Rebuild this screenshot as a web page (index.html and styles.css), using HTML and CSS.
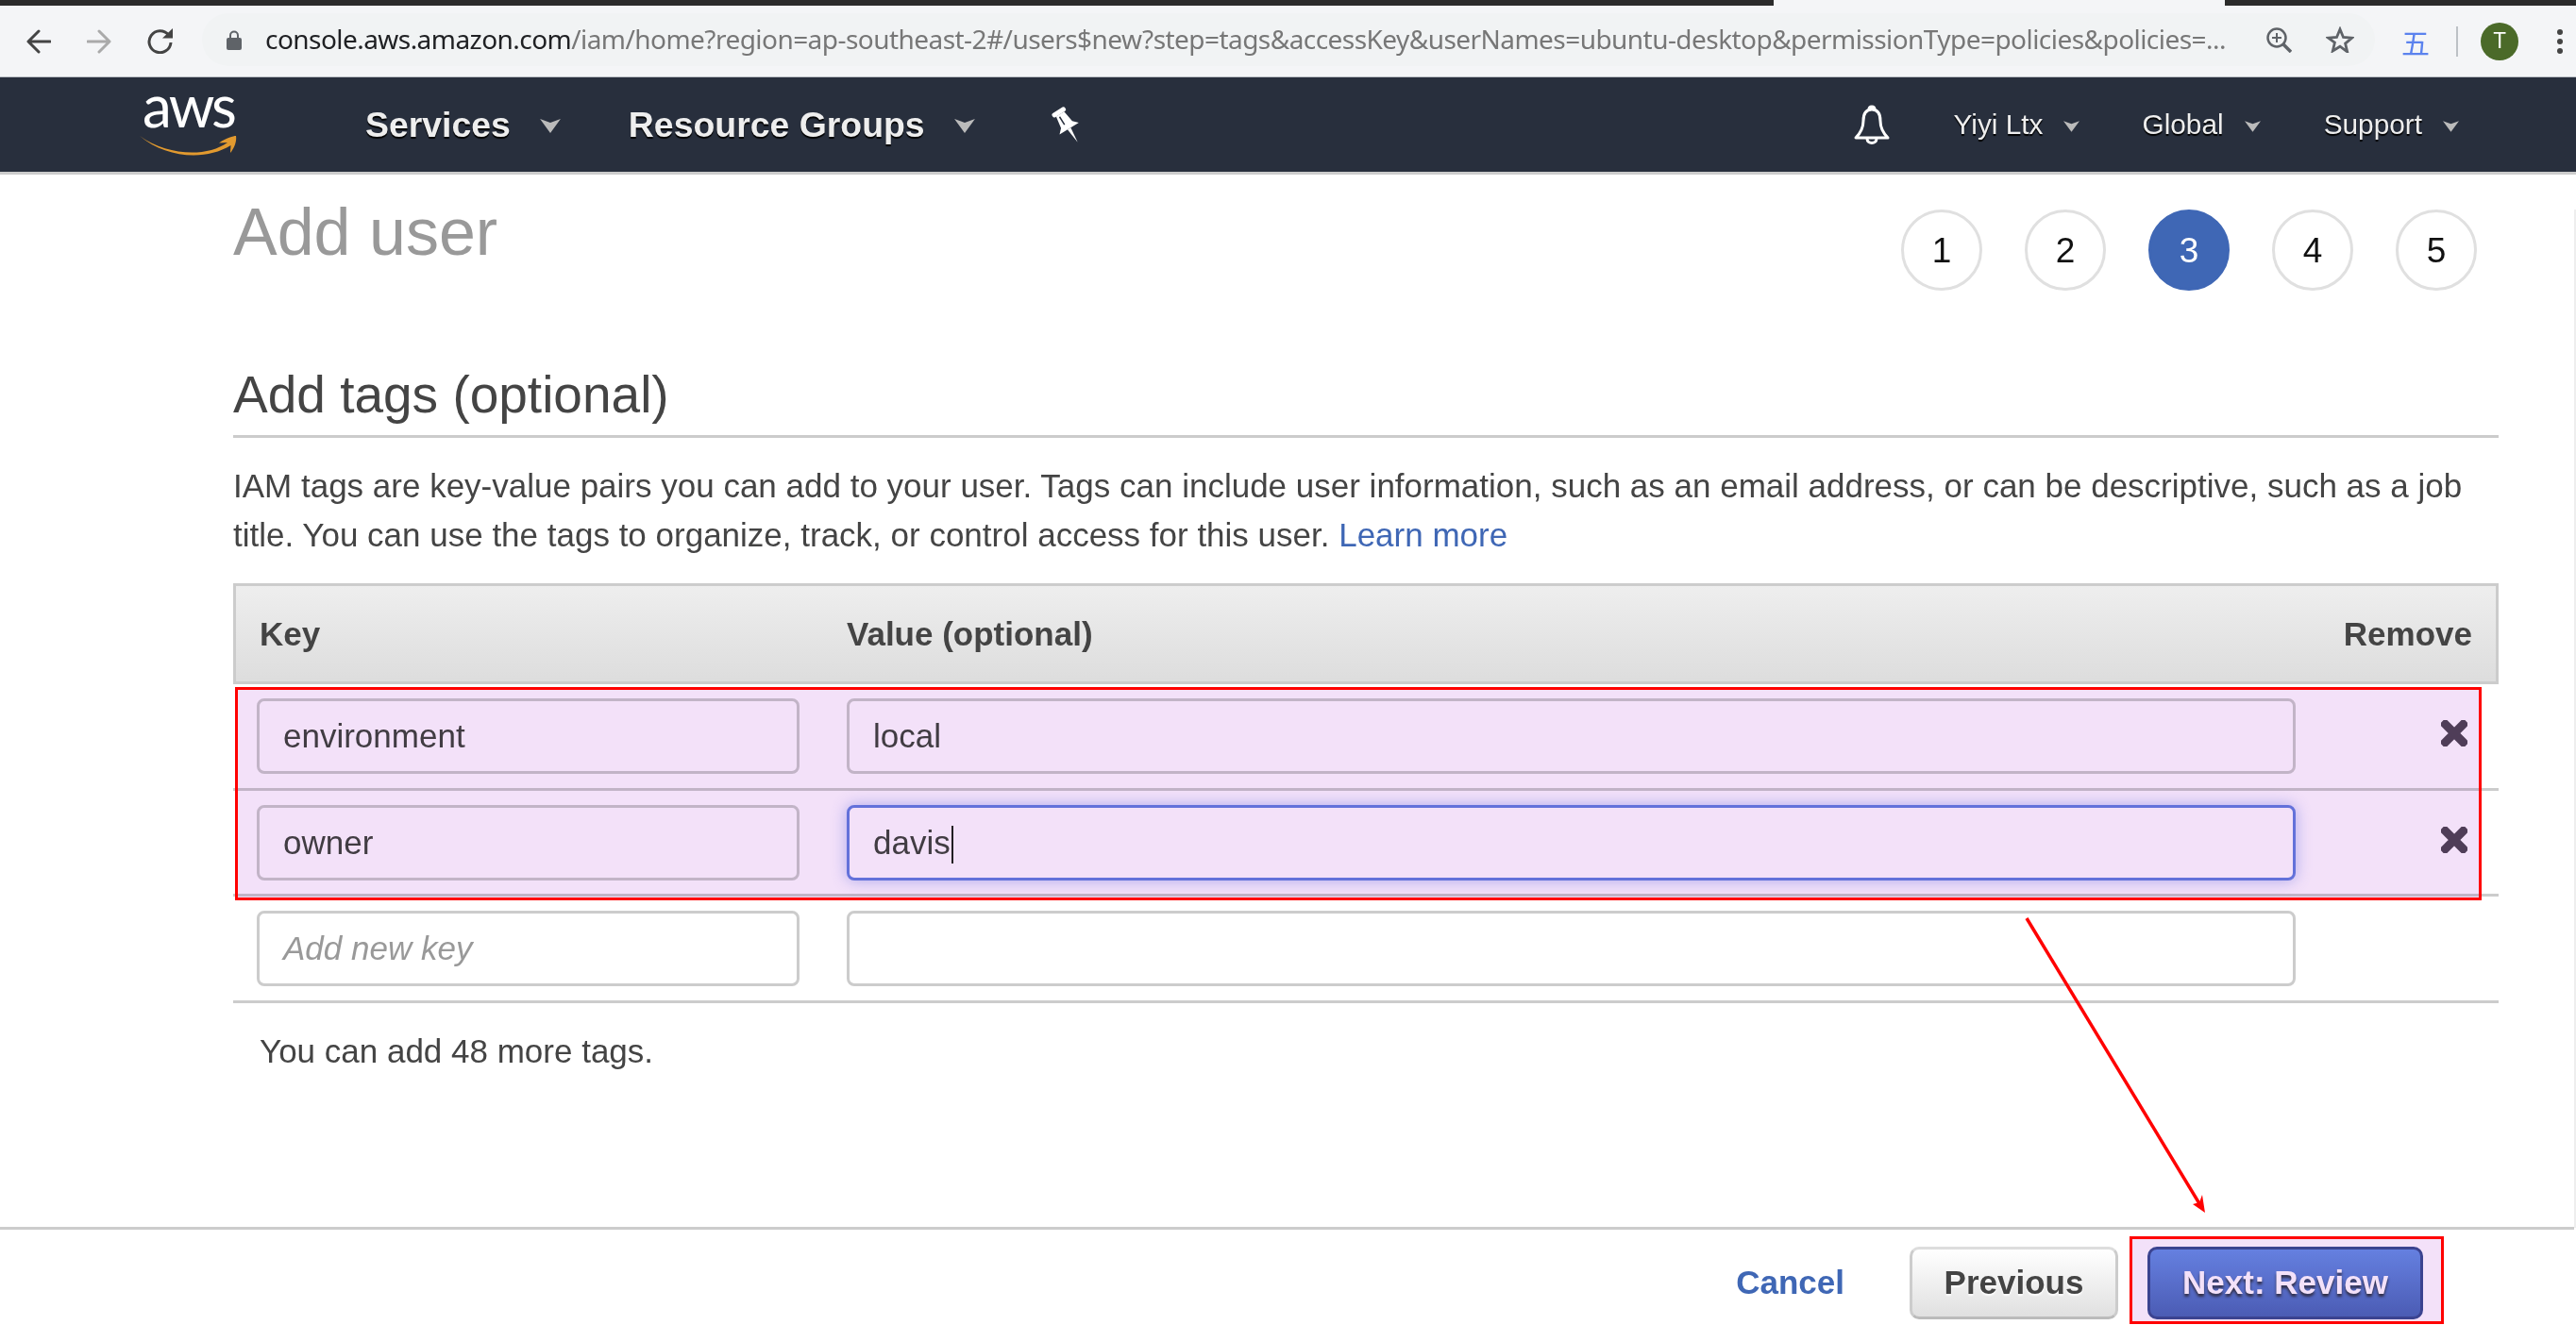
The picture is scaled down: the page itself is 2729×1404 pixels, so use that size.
FILE: index.html
```html
<!DOCTYPE html>
<html>
<head>
<meta charset="utf-8">
<title>Add user</title>
<link rel="stylesheet" href="styles.css">
</head>
<body>

<div class="tabstrip"><div class="tab-cut"></div></div>

<div class="toolbar">
  <svg class="tb-icon back" viewBox="0 0 26 26"><path d="M25 13H3M13 2 2 13l11 11" fill="none" stroke="#444" stroke-width="3" stroke-linecap="round" stroke-linejoin="round"/></svg>
  <svg class="tb-icon forward" viewBox="0 0 26 26"><path d="M1 13h22M13 2l11 11-11 11" fill="none" stroke="#aaa" stroke-width="3" stroke-linecap="round" stroke-linejoin="round"/></svg>
  <svg class="tb-icon reload" viewBox="0 0 27 27"><path d="M22.5 7A11.5 11.5 0 1 0 25 15" fill="none" stroke="#444" stroke-width="3"/><path d="M16 10.500h11V0z" fill="#444"/></svg>
  <div class="omnibox">
    <svg class="lock" viewBox="0 0 16 21"><path d="M4 9V5.500a4 4 0 0 1 8 0V9" fill="none" stroke="#5f6368" stroke-width="2"/><rect y="8" width="16" height="13" rx="2" fill="#5f6368"/></svg>
    <div class="url"><span class="host">console.aws.amazon.com</span>/iam/home?region=ap-southeast-2#/users$new?step=tags&amp;accessKey&amp;userNames=ubuntu-desktop&amp;permissionType=policies&amp;policies=...</div>
    <svg class="tb-icon zoom-icon" viewBox="0 0 27 27"><circle cx="11" cy="11" r="9.500" fill="none" stroke="#5f6368" stroke-width="2.500"/><path d="M18 18l8 8" stroke="#5f6368" stroke-width="3.500"/><path d="M11 6v10M6 11h10" stroke="#5f6368" stroke-width="2"/></svg>
    <svg class="tb-icon star" viewBox="0 0 30 28"><path d="M15 3l3.500 8.500 9 .7-6.900 5.900 2.100 8.800L15 21.200 7.300 26l2.100-8.800L2.500 12.200l9-.7z" fill="none" stroke="#5f6368" stroke-width="2.800"/></svg>
  </div>
  <span class="ext-glyph">五</span>
  <div class="tb-divider"></div>
  <div class="avatar">T</div>
  <div class="dots"><i></i><i></i><i></i></div>
</div>

<nav class="navbar">
  <div class="logo">
    <span class="logo-text">aws</span>
    <svg class="smile" viewBox="0 0 104 24"><path d="M1 3C30 24 72 26 94 10l-9 .5C93 5 100 3 103 3c1 6-2 13-6 18 0-3 .5-6 .5-8C70 30 28 26 1 3z" fill="#e29a2f"/></svg>
  </div>
  <a class="nav-link bold services">Services<svg class="caret big" viewBox="0 0 16 11"><path d="M0 0l8 3 8-3-8 11z"/></svg></a>
  <a class="nav-link bold groups">Resource Groups<svg class="caret big" viewBox="0 0 16 11"><path d="M0 0l8 3 8-3-8 11z"/></svg></a>
  <svg class="pin" viewBox="-18 -19 36 38"><g transform="rotate(-32)" fill="#fff"><rect x="-8" y="-18" width="16" height="5" rx="2"/><path d="M-5-13H5L7 0l5 5H-12l5-5z"/><path d="M-2 5h4L0 22z"/><path d="M-2-11v10" stroke="#282f3d" stroke-width="1.500"/></g></svg>
  <div class="nav-right">
    <svg class="bell" viewBox="0 0 40 42"><path d="M20 5c-7 0-9 6-9 12 0 8-3 13-8 18h34c-5-5-8-10-8-18 0-6-2-12-9-12zM17 5c0-4 6-4 6 0M15 36c0 6 10 6 10 0" fill="none" stroke="#fff" stroke-width="3" stroke-linejoin="round"/></svg>
    <a class="nav-link small user">Yiyi Ltx<svg class="caret" viewBox="0 0 16 11"><path d="M0 0l8 3 8-3-8 11z"/></svg></a>
    <a class="nav-link small region">Global<svg class="caret" viewBox="0 0 16 11"><path d="M0 0l8 3 8-3-8 11z"/></svg></a>
    <a class="nav-link small support">Support<svg class="caret" viewBox="0 0 16 11"><path d="M0 0l8 3 8-3-8 11z"/></svg></a>
  </div>
</nav>

<main class="content">
  <div class="title-row">
    <h1>Add user</h1>
    <div class="steps">
      <div class="step">1</div>
      <div class="step">2</div>
      <div class="step active">3</div>
      <div class="step">4</div>
      <div class="step">5</div>
    </div>
  </div>

  <h2>Add tags (optional)</h2>
  <p class="intro">IAM tags are key-value pairs you can add to your user. Tags can include user information, such as an email address, or can be descriptive, such as a job title. You can use the tags to organize, track, or control access for this user. <a class="link">Learn more</a></p>

  <div class="tag-table">
    <div class="tag-head">
      <div>Key</div>
      <div>Value (optional)</div>
      <div class="remove-col">Remove</div>
    </div>
    <div class="tag-row">
      <div class="field">environment</div>
      <div class="field">local</div>
      <div class="remove-col"><svg class="x-icon" viewBox="0 0 28 28"><path d="M4.500 4.500l19 19M23.500 4.500l-19 19" stroke="#53455a" stroke-width="9" stroke-linecap="square"/></svg></div>
    </div>
    <div class="tag-row">
      <div class="field">owner</div>
      <div class="field focused">davis<span class="cursor"></span></div>
      <div class="remove-col"><svg class="x-icon" viewBox="0 0 28 28"><path d="M4.500 4.500l19 19M23.500 4.500l-19 19" stroke="#53455a" stroke-width="9" stroke-linecap="square"/></svg></div>
    </div>
    <div class="tag-row">
      <div class="field placeholder">Add new key</div>
      <div class="field"></div>
      <div class="remove-col"></div>
    </div>
  </div>

  <p class="tags-left">You can add 48 more tags.</p>
</main>

<footer class="wizard-footer">
  <a class="link cancel">Cancel</a>
  <button class="btn btn-prev">Previous</button>
  <button class="btn btn-next">Next: Review</button>
</footer>

<div class="scrollbar"></div>

<!-- annotations drawn on top of the screenshot -->
<div class="mark mark-rows"></div>
<div class="mark mark-next"></div>
<svg class="arrow" viewBox="0 0 200 320"><path d="M2 2 186 306" stroke="#f00" stroke-width="3.500" fill="none"/><path d="M191 314l-13-9 7-2 3-8z" fill="#f00"/></svg>

</body>
</html>
```

FILE: styles.css
```css
* {
  box-sizing: border-box;
}

html, body {
  margin: 0;
  height: 1404px;
  overflow: hidden;
}

body {
  font-family: "Liberation Sans", Arial, sans-serif;
  font-size: 35px;
  color: #444;
  background-color: #fff;
  display: flex;
  flex-direction: column;
  position: relative;
}

/* browser chrome */
.tabstrip {
  height: 6px;
  background-color: #2b2b2b;
  flex: none;
}

.tab-cut {
  width: 478px;
  height: 6px;
  margin-left: 1879px;
  background-color: #f4f5f7;
}

.toolbar {
  height: 76px;
  flex: none;
  display: flex;
  align-items: center;
  background-color: #f4f5f7;
  border-bottom: 1px solid #bcc0c6;
  padding-left: 28px;
}

.tb-icon {
  flex: none;
  display: block;
}

.back, .forward {
  width: 26px;
  height: 26px;
  margin-right: 38px;
}

.reload {
  width: 27px;
  height: 27px;
  margin-right: 31px;
}

.omnibox {
  width: 2302px;
  height: 56px;
  margin-top: -3px;
  flex: none;
  display: flex;
  align-items: center;
  background-color: #f1f3f4;
  border-radius: 28px;
  padding-left: 26px;
}

.lock {
  width: 16px;
  height: 21px;
  flex: none;
  margin-right: 25px;
}

.url {
  width: 2075px;
  flex: none;
  white-space: nowrap;
  font-family: "Noto Sans", sans-serif;
  font-size: 28px;
  letter-spacing: -0.55px;
  color: #777;
  margin-top: -2px;
}

.host {
  color: #202124;
}

.zoom-icon {
  width: 27px;
  height: 27px;
  margin-left: 45px;
}

.star {
  width: 30px;
  height: 28px;
  margin-left: 36px;
}

.ext-glyph {
  width: 34px;
  margin-left: 28px;
  font-family: "Noto Sans CJK SC", sans-serif;
  font-size: 30px;
  color: #5b82ee;
  flex: none;
}

.tb-divider {
  width: 2px;
  height: 32px;
  margin-left: 24px;
  background-color: #bdc1c6;
  flex: none;
}

.avatar {
  width: 40px;
  height: 40px;
  margin-left: 24px;
  border-radius: 50%;
  background-color: #4b6a29;
  color: #fff;
  font-family: "Roboto", sans-serif;
  font-size: 23px;
  line-height: 40px;
  text-align: center;
  flex: none;
}

.dots {
  display: flex;
  flex-direction: column;
  gap: 4px;
  margin-left: 41px;
  flex: none;
}

.dots i {
  display: block;
  width: 6px;
  height: 6px;
  border-radius: 50%;
  background-color: #444;
}

/* aws nav */
.navbar {
  height: 103px;
  flex: none;
  display: flex;
  align-items: center;
  background-color: #282f3d;
  border-bottom: 3px solid #ccc;
  padding-left: 148px;
  color: #eee;
}

.logo {
  width: 102px;
  height: 64px;
  flex: none;
  margin-bottom: 12px;
}

.logo-text {
  display: block;
  font-family: "Lato", sans-serif;
  font-size: 62px;
  line-height: 50px;
  letter-spacing: -3px;
  color: #fff;
  margin: -8px 0 0 3px;
}

.smile {
  display: block;
  width: 104px;
  height: 24px;
  margin: 5px 0 0 -1px;
}

.nav-link {
  display: flex;
  align-items: center;
  white-space: nowrap;
  text-shadow: 0 2px 1px #000;
}

.bold {
  font-size: 37.400px;
  font-weight: bold;
}

.small {
  font-size: 29.800px;
}

.services {
  margin-left: 137px;
}

.groups {
  margin-left: 71px;
}

.caret {
  width: 17px;
  height: 12px;
  margin-left: 22px;
  margin-top: 3px;
  fill: #bbb;
  flex: none;
}

.caret.big {
  width: 24px;
  height: 15px;
  margin-left: 30px;
}

.pin {
  width: 36px;
  height: 38px;
  margin-left: 78px;
  flex: none;
}

.nav-right {
  margin-left: auto;
  margin-right: 124px;
  display: flex;
  align-items: center;
}

.bell {
  width: 40px;
  height: 42px;
  margin-right: 67px;
}

.user {
  margin-right: 66px;
}

.region {
  margin-right: 67px;
}

/* page */
.content {
  flex: 1;
  min-height: 0;
  padding: 37px 82px 0 247px;
}

.title-row {
  display: flex;
  justify-content: space-between;
  align-items: flex-start;
  padding-right: 23px;
}

h1 {
  margin: -2px 0 0;
  font-size: 70px;
  font-weight: normal;
  line-height: 52px;
  color: #999;
}

.steps {
  display: flex;
  gap: 45px;
}

.step {
  width: 86px;
  height: 86px;
  border: 3px solid #e0e0e0;
  border-radius: 50%;
  font-size: 37px;
  line-height: 82px;
  text-align: center;
  color: #111;
}

.step.active {
  background-color: #3f67b5;
  border-color: #3f67b5;
  color: #fff;
}

h2 {
  margin: 78px 0 0;
  height: 78px;
  font-size: 55px;
  font-weight: normal;
  line-height: 64px;
  border-bottom: 3px solid #ccc;
}

.intro {
  margin: 25px 0 0;
  line-height: 52px;
}

.link {
  color: #3f67b5;
}

.tag-table {
  margin-top: 25px;
}

.tag-head, .tag-row {
  display: grid;
  grid-template-columns: 575px 1535px 1fr;
  column-gap: 50px;
  align-items: center;
}

.tag-head {
  height: 107px;
  padding-left: 25px;
  column-gap: 47px;
  border: 3px solid #ccc;
  background: linear-gradient(#eee, #ddd);
  font-weight: bold;
}

.tag-row {
  padding: 15px 0 14.500px 25px;
  border-bottom: 3px solid #ccc;
}

.remove-col {
  text-align: right;
  padding-right: 25px;
}

.tag-row .remove-col {
  padding-right: 33px;
  line-height: 0;
  margin-top: -6px;
}

.field {
  height: 80px;
  padding: 0 25px;
  border: 3px solid #ccc;
  border-radius: 8px;
  line-height: 74px;
  background-color: #fff;
}

.focused {
  border-color: #6880e0;
  box-shadow: 0 0 16px rgba(90, 110, 225, 0.45);
}

.placeholder {
  color: #999;
  font-style: italic;
}

.cursor {
  display: inline-block;
  width: 2px;
  height: 40px;
  margin-left: 1px;
  background-color: #222;
  vertical-align: middle;
}

.x-icon {
  width: 28px;
  height: 28px;
}

.tags-left {
  margin: 30px 0 0 28px;
  line-height: 42px;
}

.wizard-footer {
  height: 104px;
  flex: none;
  display: flex;
  align-items: flex-start;
  justify-content: flex-end;
  padding: 18px 160px 0 0;
  margin-right: 2px;
  border-top: 3px solid #ccc;
}

.cancel {
  font-weight: bold;
  line-height: 75px;
  margin-right: 69px;
}

.btn {
  height: 77px;
  font-family: inherit;
  font-size: 35px;
  font-weight: bold;
  border-radius: 10px;
  padding: 0 0 2px;
}

.btn-prev {
  width: 221px;
  margin-right: 31px;
  color: #444;
  border: 3px solid #ddd;
  border-bottom-color: #bbb;
  border-left-color: #ccc;
  border-right-color: #ccc;
  background: linear-gradient(#fff, #e0e0e0);
  text-shadow: 0 2px 2px #fff;
}

.btn-next {
  width: 292px;
  color: #fff;
  border: 3px solid #3e4c94;
  background: linear-gradient(#6a91e6, #4f68b9);
  text-shadow: 0 3px 3px #334;
}

.scrollbar {
  position: absolute;
  top: 222px;
  right: 0;
  width: 2px;
  height: 1079px;
  background-color: #eee;
}

/* annotations */
.mark {
  position: absolute;
  border: 3px solid #f00;
}

.mark::before {
  content: "";
  position: absolute;
  inset: 0;
  background-color: #f3e1f9;
  mix-blend-mode: multiply;
}

.mark-rows {
  left: 249px;
  top: 728px;
  width: 2380px;
  height: 226px;
}

.mark-next {
  left: 2256px;
  top: 1310px;
  width: 333px;
  height: 93px;
}

.arrow {
  position: absolute;
  left: 2145px;
  top: 971px;
  width: 200px;
  height: 320px;
}
```
